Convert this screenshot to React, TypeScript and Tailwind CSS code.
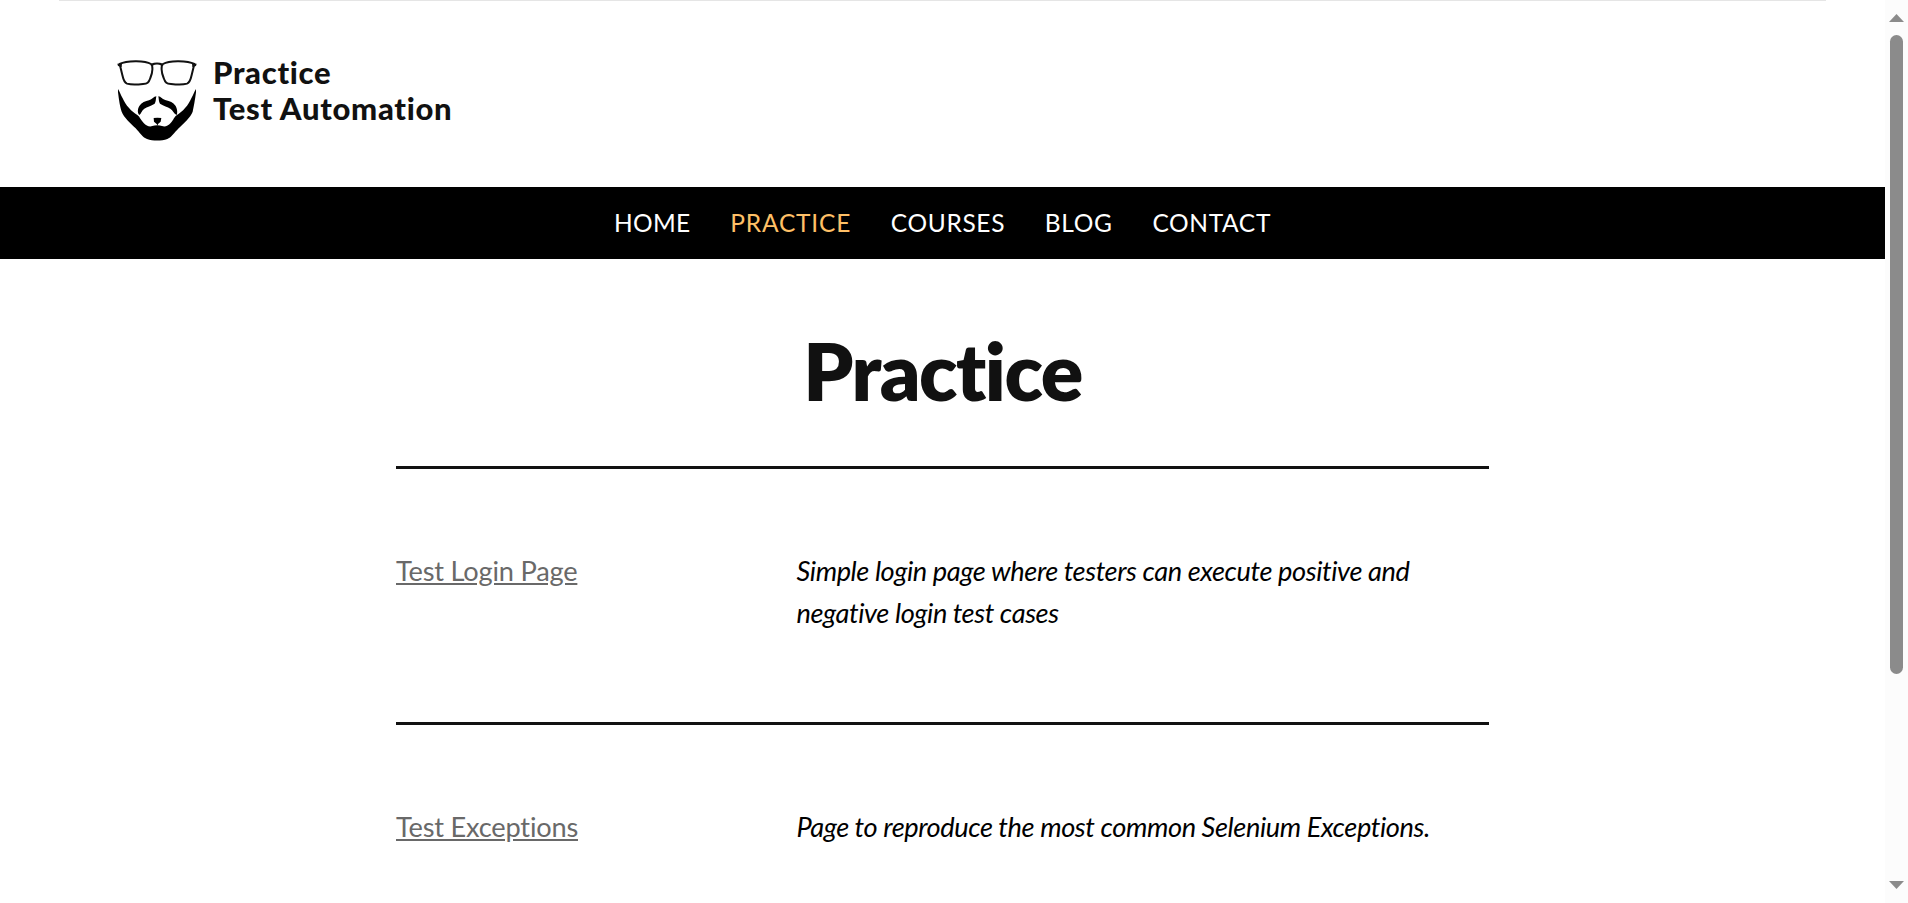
import React from 'react';

const navItems = [
  { label: 'HOME', active: false, spacing: 'tracking-[0.35px]' },
  { label: 'PRACTICE', active: true, spacing: 'tracking-[0.8px]' },
  { label: 'COURSES', active: false, spacing: 'tracking-[0.65px]' },
  { label: 'BLOG', active: false, spacing: 'tracking-[0.7px]' },
  { label: 'CONTACT', active: false, spacing: 'tracking-[0.65px]' },
];

const exercises = [
  {
    title: 'Test Login Page',
    description: 'Simple login page where testers can execute positive and negative login test cases',
    size: 'h-[256px]',
  },
  {
    title: 'Test Exceptions',
    description: 'Page to reproduce the most common Selenium Exceptions.',
    size: 'h-[178px]',
  },
];

function BeardLogo() {
  return (
    <svg className="h-[84px] w-[84px] shrink-0" viewBox="48 24 252 252" fill="none">
      <g stroke="#111" strokeWidth="6" strokeLinejoin="round">
        <path d="M59 42C78 32 134 30 153 42C159 47 159 65 151 84C146 99 142 101 129 102C111 104 91 104 81 101C73 98 70 89 67 75Z" />
        <path d="M283 42C264 32 208 30 189 42C183 47 183 65 191 84C196 99 200 101 213 102C231 104 251 104 261 101C269 98 272 89 275 75Z" />
        <path d="M156 44C164 40 178 40 186 44" strokeWidth="7" />
      </g>
      <path fill="#111" d="M52 41L66 40L65 51L54 48ZM290 41L276 40L277 51L288 48Z" />
      <path
        fill="#000"
        d="M54 117C59 124 62 134 68 145C77 166 94 184 112 195C120 201 121 209 131 219C139 228 149 231 157 228C165 225 178 225 186 228C195 231 204 228 212 219C222 208 222 201 231 195C249 184 265 166 274 145C280 134 283 124 288 117L288 127C285 150 281 172 278 185C271 203 251 220 236 235C223 248 213 264 202 267C184 273 159 273 141 267C129 264 119 248 107 235C92 220 72 203 65 185C60 172 57 150 54 127Z"
      />
      <path
        fill="#000"
        d="M169 139C167 150 168 154 164 161C153 168 141 170 133 176C125 181 124 190 118 195C112 190 112 177 118 168C124 158 137 153 147 151C157 148 161 140 169 139ZM175 139C177 150 176 154 180 161C191 168 203 170 211 176C219 181 221 190 230 195C233 190 232 177 227 168C221 158 208 153 198 151C187 148 183 140 175 139Z"
      />
      <path fill="#000" d="M161 204Q172 202 184 204L182 215L174 222L173 227L170 222L162 215Z" />
    </svg>
  );
}

function Header() {
  return (
    <header className="flex h-[187px] flex-col px-[59px]">
      <div className="h-px w-[1767px] shrink-0 bg-[#e5e5e5]" />
      <div className="flex gap-[13px] pt-[57px] pl-[57px]">
        <BeardLogo />
        <div className="-mt-[4px] text-[31px] leading-[36px] font-black tracking-[0.7px] text-[#111]">
          <div>Practice</div>
          <div>Test Automation</div>
        </div>
      </div>
    </header>
  );
}

function Nav() {
  return (
    <nav className="flex h-[72px] items-center justify-center gap-[39.7px] bg-black text-[24.5px] leading-[36px] text-white">
      {navItems.map((item) => (
        <a key={item.label} className={`${item.spacing} ${item.active ? 'text-[#ffc067]' : 'text-white'}`}>
          {item.label}
        </a>
      ))}
    </nav>
  );
}

function Scrollbar() {
  return (
    <div className="flex w-[23px] shrink-0 flex-col items-center bg-[#fcfcfc] pt-[14px] pb-[14px]">
      <svg className="h-[8px] w-[15px] shrink-0" viewBox="0 0 15 8">
        <path d="M0 8L7.5 0L15 8Z" fill="#8b8b8b" />
      </svg>
      <div className="mt-[13px] h-[639px] w-[13px] shrink-0 rounded-full bg-[#8b8b8b]" />
      <svg className="mt-auto h-[8px] w-[15px] shrink-0" viewBox="0 0 15 8">
        <path d="M0 0L7.5 8L15 0Z" fill="#8b8b8b" />
      </svg>
    </div>
  );
}

export default function App() {
  return (
    <div className="flex h-[903px] w-[1908px] overflow-hidden bg-white font-['Lato',sans-serif] text-[#111] [font-variant-ligatures:none]">
      <div className="flex w-[1885px] shrink-0 flex-col">
        <Header />
        <Nav />
        <main className="mx-auto w-[1093px]">
          <h1 className="flex h-[207px] justify-center pt-[62px] text-[79px] leading-[100px] font-extrabold tracking-[-1.5px]">
            Practice
          </h1>
          {exercises.map((exercise) => (
            <section key={exercise.title} className={exercise.size}>
              <div className="mb-[81px] h-[3px] bg-[#111]" />
              <div className="flex text-[27.2px] leading-[42px]">
                <div className="w-[400.5px] shrink-0">
                  <a className="tracking-[-0.2px] text-[#696969] underline">{exercise.title}</a>
                </div>
                <p className="tracking-[-0.4px] text-black italic">{exercise.description}</p>
              </div>
            </section>
          ))}
        </main>
      </div>
      <Scrollbar />
    </div>
  );
}
